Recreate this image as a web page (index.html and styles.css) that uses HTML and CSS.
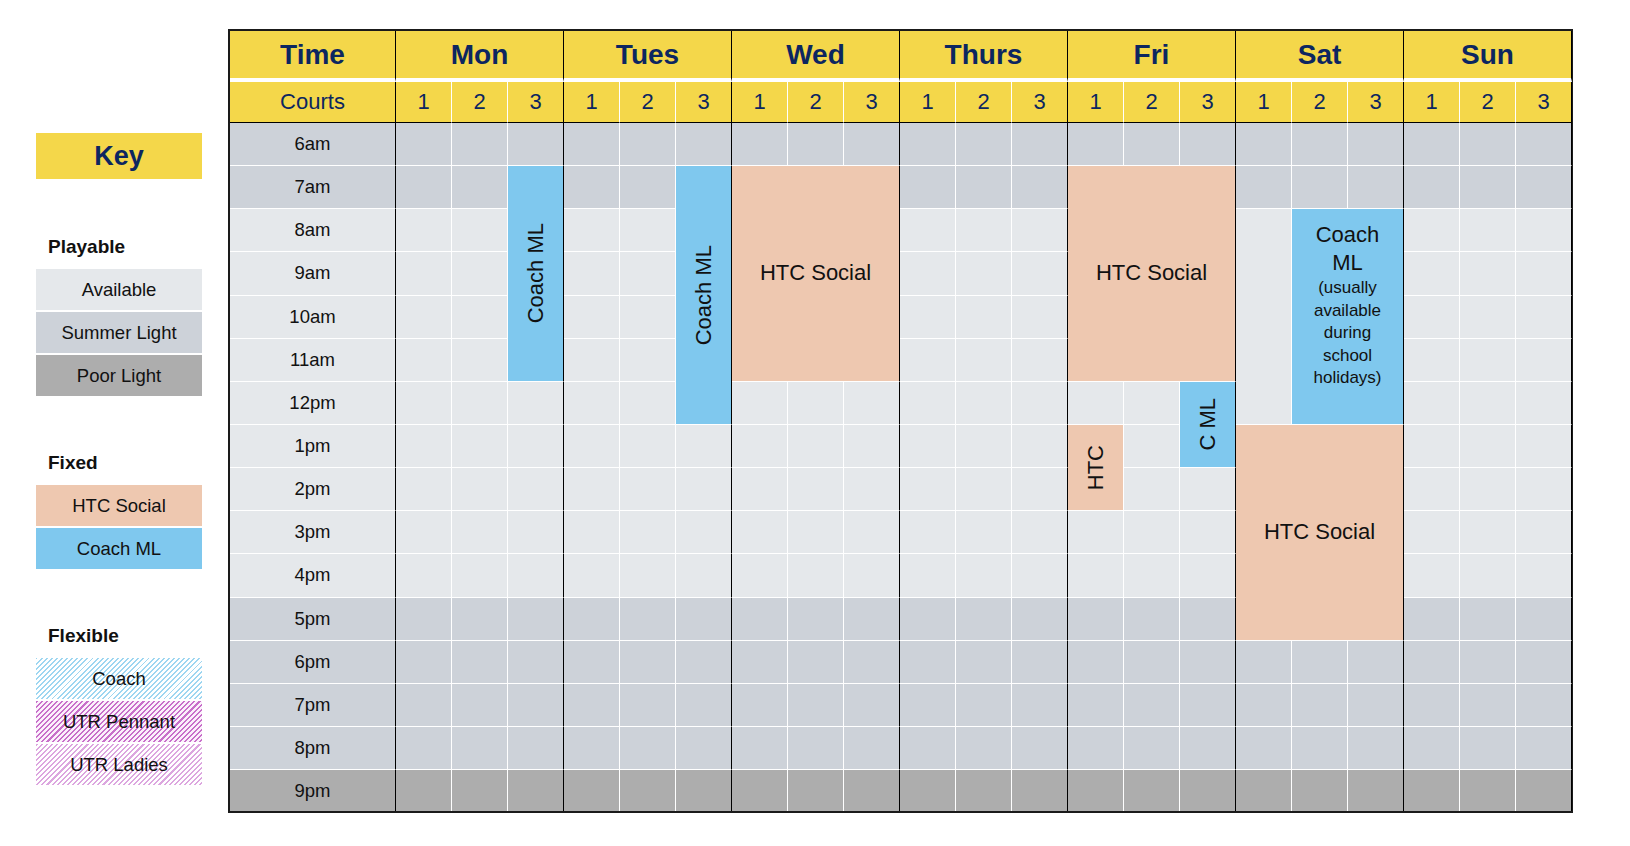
FILE: index.html
```html
<!DOCTYPE html>
<html lang="en">
<head>
<meta charset="utf-8">
<title>Court Schedule</title>
<link rel="stylesheet" href="styles.css">
</head>
<body>
<div class="page">
  <aside class="key">
    <div class="key-title">Key</div>
    <section class="group">
      <h3 class="group-label">Playable</h3>
      <div class="swatches">
        <div class="sw sw-av">Available</div>
        <div class="sw sw-sl">Summer Light</div>
        <div class="sw sw-pl">Poor Light</div>
      </div>
    </section>
    <section class="group">
      <h3 class="group-label">Fixed</h3>
      <div class="swatches">
        <div class="sw sw-htc">HTC Social</div>
        <div class="sw sw-cml">Coach ML</div>
      </div>
    </section>
    <section class="group">
      <h3 class="group-label">Flexible</h3>
      <div class="swatches">
        <div class="sw sw-coach">Coach</div>
        <div class="sw sw-pen">UTR Pennant</div>
        <div class="sw sw-lad">UTR Ladies</div>
      </div>
    </section>
  </aside>

  <div class="sched">
    <div class="hd hd-time">Time</div>
    <div class="hd">Mon</div>
    <div class="hd">Tues</div>
    <div class="hd">Wed</div>
    <div class="hd">Thurs</div>
    <div class="hd">Fri</div>
    <div class="hd">Sat</div>
    <div class="hd">Sun</div>

    <div class="courts">Courts</div>
    <div class="n">1</div><div class="n">2</div><div class="n e">3</div>
    <div class="n">1</div><div class="n">2</div><div class="n e">3</div>
    <div class="n">1</div><div class="n">2</div><div class="n e">3</div>
    <div class="n">1</div><div class="n">2</div><div class="n e">3</div>
    <div class="n">1</div><div class="n">2</div><div class="n e">3</div>
    <div class="n">1</div><div class="n">2</div><div class="n e">3</div>
    <div class="n">1</div><div class="n">2</div><div class="n e">3</div>

    <div class="r sl"><div class="t">6am</div>
      <div class="c"></div><div class="c"></div><div class="c e"></div>
      <div class="c"></div><div class="c"></div><div class="c e"></div>
      <div class="c"></div><div class="c"></div><div class="c e"></div>
      <div class="c"></div><div class="c"></div><div class="c e"></div>
      <div class="c"></div><div class="c"></div><div class="c e"></div>
      <div class="c"></div><div class="c"></div><div class="c e"></div>
      <div class="c"></div><div class="c"></div><div class="c e"></div>
    </div>
    <div class="r sl"><div class="t">7am</div>
      <div class="c"></div><div class="c"></div>
      <div class="c"></div><div class="c"></div>
      <div class="c"></div><div class="c"></div><div class="c e"></div>
      <div class="c"></div><div class="c"></div><div class="c e"></div>
      <div class="c"></div><div class="c"></div><div class="c e"></div>
    </div>
    <div class="r av"><div class="t">8am</div>
      <div class="c"></div><div class="c"></div>
      <div class="c"></div><div class="c"></div>
      <div class="c"></div><div class="c"></div><div class="c e"></div>
      <div class="c"></div><div class="c"></div><div class="c e"></div>
    </div>
    <div class="r av"><div class="t">9am</div>
      <div class="c"></div><div class="c"></div>
      <div class="c"></div><div class="c"></div>
      <div class="c"></div><div class="c"></div><div class="c e"></div>
      <div class="c"></div><div class="c"></div><div class="c e"></div>
    </div>
    <div class="r av"><div class="t">10am</div>
      <div class="c"></div><div class="c"></div>
      <div class="c"></div><div class="c"></div>
      <div class="c"></div><div class="c"></div><div class="c e"></div>
      <div class="c"></div><div class="c"></div><div class="c e"></div>
    </div>
    <div class="r av"><div class="t">11am</div>
      <div class="c"></div><div class="c"></div>
      <div class="c"></div><div class="c"></div>
      <div class="c"></div><div class="c"></div><div class="c e"></div>
      <div class="c"></div><div class="c"></div><div class="c e"></div>
    </div>
    <div class="r av"><div class="t">12pm</div>
      <div class="c"></div><div class="c"></div><div class="c e"></div>
      <div class="c"></div><div class="c"></div>
      <div class="c"></div><div class="c"></div><div class="c e"></div>
      <div class="c"></div><div class="c"></div><div class="c e"></div>
      <div class="c"></div><div class="c"></div>
      <div class="c"></div><div class="c"></div><div class="c e"></div>
    </div>
    <div class="r av"><div class="t">1pm</div>
      <div class="c"></div><div class="c"></div><div class="c e"></div>
      <div class="c"></div><div class="c"></div><div class="c e"></div>
      <div class="c"></div><div class="c"></div><div class="c e"></div>
      <div class="c"></div><div class="c"></div><div class="c e"></div>
      <div class="c"></div>
      <div class="c"></div><div class="c"></div><div class="c e"></div>
    </div>
    <div class="r av"><div class="t">2pm</div>
      <div class="c"></div><div class="c"></div><div class="c e"></div>
      <div class="c"></div><div class="c"></div><div class="c e"></div>
      <div class="c"></div><div class="c"></div><div class="c e"></div>
      <div class="c"></div><div class="c"></div><div class="c e"></div>
      <div class="c"></div><div class="c e"></div>
      <div class="c"></div><div class="c"></div><div class="c e"></div>
    </div>
    <div class="r av"><div class="t">3pm</div>
      <div class="c"></div><div class="c"></div><div class="c e"></div>
      <div class="c"></div><div class="c"></div><div class="c e"></div>
      <div class="c"></div><div class="c"></div><div class="c e"></div>
      <div class="c"></div><div class="c"></div><div class="c e"></div>
      <div class="c"></div><div class="c"></div><div class="c e"></div>
      <div class="c"></div><div class="c"></div><div class="c e"></div>
    </div>
    <div class="r av"><div class="t">4pm</div>
      <div class="c"></div><div class="c"></div><div class="c e"></div>
      <div class="c"></div><div class="c"></div><div class="c e"></div>
      <div class="c"></div><div class="c"></div><div class="c e"></div>
      <div class="c"></div><div class="c"></div><div class="c e"></div>
      <div class="c"></div><div class="c"></div><div class="c e"></div>
      <div class="c"></div><div class="c"></div><div class="c e"></div>
    </div>
    <div class="r sl"><div class="t">5pm</div>
      <div class="c"></div><div class="c"></div><div class="c e"></div>
      <div class="c"></div><div class="c"></div><div class="c e"></div>
      <div class="c"></div><div class="c"></div><div class="c e"></div>
      <div class="c"></div><div class="c"></div><div class="c e"></div>
      <div class="c"></div><div class="c"></div><div class="c e"></div>
      <div class="c"></div><div class="c"></div><div class="c e"></div>
    </div>
    <div class="r sl"><div class="t">6pm</div>
      <div class="c"></div><div class="c"></div><div class="c e"></div>
      <div class="c"></div><div class="c"></div><div class="c e"></div>
      <div class="c"></div><div class="c"></div><div class="c e"></div>
      <div class="c"></div><div class="c"></div><div class="c e"></div>
      <div class="c"></div><div class="c"></div><div class="c e"></div>
      <div class="c"></div><div class="c"></div><div class="c e"></div>
      <div class="c"></div><div class="c"></div><div class="c e"></div>
    </div>
    <div class="r sl"><div class="t">7pm</div>
      <div class="c"></div><div class="c"></div><div class="c e"></div>
      <div class="c"></div><div class="c"></div><div class="c e"></div>
      <div class="c"></div><div class="c"></div><div class="c e"></div>
      <div class="c"></div><div class="c"></div><div class="c e"></div>
      <div class="c"></div><div class="c"></div><div class="c e"></div>
      <div class="c"></div><div class="c"></div><div class="c e"></div>
      <div class="c"></div><div class="c"></div><div class="c e"></div>
    </div>
    <div class="r sl"><div class="t">8pm</div>
      <div class="c"></div><div class="c"></div><div class="c e"></div>
      <div class="c"></div><div class="c"></div><div class="c e"></div>
      <div class="c"></div><div class="c"></div><div class="c e"></div>
      <div class="c"></div><div class="c"></div><div class="c e"></div>
      <div class="c"></div><div class="c"></div><div class="c e"></div>
      <div class="c"></div><div class="c"></div><div class="c e"></div>
      <div class="c"></div><div class="c"></div><div class="c e"></div>
    </div>
    <div class="r pl"><div class="t">9pm</div>
      <div class="c"></div><div class="c"></div><div class="c e"></div>
      <div class="c"></div><div class="c"></div><div class="c e"></div>
      <div class="c"></div><div class="c"></div><div class="c e"></div>
      <div class="c"></div><div class="c"></div><div class="c e"></div>
      <div class="c"></div><div class="c"></div><div class="c e"></div>
      <div class="c"></div><div class="c"></div><div class="c e"></div>
      <div class="c"></div><div class="c"></div><div class="c e"></div>
    </div>

    <div class="blk cml e b-mon3"><span class="vt">Coach ML</span></div>
    <div class="blk cml e b-tue3"><span class="vt">Coach ML</span></div>
    <div class="blk htc e b-wed">HTC Social</div>
    <div class="blk htc e b-fri">HTC Social</div>
    <div class="blk cml e b-fri3"><span class="vt">C ML</span></div>
    <div class="blk htc b-fri1"><span class="vt">HTC</span></div>
    <div class="blk avail b-sat1"></div>
    <div class="blk cml e b-satc">
      <div class="sat-text">
        <span class="big">Coach<br>ML</span>
        <span class="small">(usually<br>available<br>during<br>school<br>holidays)</span>
      </div>
    </div>
    <div class="blk htc e b-sat">HTC Social</div>
  </div>
</div>
</body>
</html>
```

FILE: styles.css
```css
* {
  box-sizing: border-box;
  margin: 0;
  padding: 0;
}

body {
  background: #ffffff;
  font-family: "Liberation Sans", Arial, sans-serif;
  color: #111111;
}

.page {
  display: flex;
  align-items: flex-start;
  gap: 26px;
  padding: 29px 0 0 36px;
}

/* ---------- Key / legend ---------- */
.key {
  width: 166px;
  margin-top: 104px;
  display: flex;
  flex-direction: column;
  gap: 55px;
}

.key-title {
  height: 46px;
  margin-bottom: 1px;
  background: #f4d74a;
  color: #0c2660;
  font-weight: 700;
  font-size: 27px;
  display: flex;
  align-items: center;
  justify-content: center;
}

.group-label {
  height: 24px;
  line-height: 24px;
  margin-bottom: 10px;
  padding-left: 12px;
  font-size: 19px;
  font-weight: 700;
  color: #111111;
}

.swatches {
  display: flex;
  flex-direction: column;
  gap: 2px;
}

.sw {
  height: 41px;
  display: flex;
  align-items: center;
  justify-content: center;
  font-size: 18.5px;
  color: #111111;
}

.sw-av { background: #e5e8eb; }
.sw-sl { background: #cdd2d9; }
.sw-pl { background: #adadad; }
.sw-htc { background: #eec8b0; }
.sw-cml { background: #7fc8ee; }
.sw-coach {
  background: repeating-linear-gradient(135deg, #9dd6f1 0 1.4px, #ffffff 1.4px 3.6px);
}
.sw-pen {
  background: repeating-linear-gradient(135deg, #c86fca 0 1.5px, #fbf0fb 1.5px 3.6px);
}
.sw-lad {
  background: repeating-linear-gradient(135deg, #dca6df 0 1.5px, #ffffff 1.5px 3.6px);
}

/* ---------- Schedule grid ---------- */
.sched {
  display: grid;
  grid-template-columns: 166px repeat(21, 56px);
  grid-template-rows: 51px 41px repeat(15, 43.15px) 41px;
  border: 2px solid #1a1a1a;
  border-right-width: 1px;
}

.hd {
  grid-column: span 3;
  background: #f4d74a;
  color: #0c2660;
  font-weight: 700;
  font-size: 28px;
  display: flex;
  align-items: center;
  justify-content: center;
  border-right: 1px solid #000000;
  border-bottom: 4px solid #ffffff;
}

.hd-time {
  grid-column: span 1;
}

.courts,
.n {
  background: #f4d74a;
  color: #0c2660;
  font-size: 22px;
  display: flex;
  align-items: center;
  justify-content: center;
  border-bottom: 1px solid #000000;
  border-right: 1px solid #ffffff;
}

.courts {
  border-right-color: #000000;
}

.r {
  display: contents;
}

.t {
  font-size: 18.5px;
  display: flex;
  align-items: center;
  justify-content: center;
  border-right: 1px solid #000000;
  border-bottom: 1px solid #ffffff;
}

.c {
  border-right: 1px solid #ffffff;
  border-bottom: 1px solid #ffffff;
}

.e {
  border-right-color: #000000;
}

.sl > * { background: #cdd2d9; }
.av > * { background: #e5e8eb; }
.pl > * {
  background: #adadad;
  border-bottom: 0;
}

/* ---------- Booking blocks ---------- */
.blk {
  display: flex;
  align-items: center;
  justify-content: center;
  font-size: 22px;
  color: #111111;
  border-right: 1px solid #ffffff;
  border-bottom: 1px solid #ffffff;
}

.blk.e {
  border-right-color: #000000;
}

.cml { background: #7fc8ee; }
.htc { background: #eec8b0; }
.avail { background: #e5e8eb; }

.vt {
  writing-mode: vertical-rl;
  transform: rotate(180deg);
  white-space: nowrap;
}

.b-mon3 { grid-column: 4; grid-row: 4 / 9; }
.b-tue3 { grid-column: 7; grid-row: 4 / 10; }
.b-wed  { grid-column: 8 / 11; grid-row: 4 / 9; }
.b-fri  { grid-column: 14 / 17; grid-row: 4 / 9; }
.b-fri3 { grid-column: 16; grid-row: 9 / 11; }
.b-fri1 { grid-column: 14; grid-row: 10 / 12; }
.b-sat1 { grid-column: 17; grid-row: 5 / 10; }
.b-satc {
  grid-column: 18 / 20;
  grid-row: 5 / 10;
  align-items: flex-start;
  padding-top: 12px;
}
.b-sat  { grid-column: 17 / 20; grid-row: 10 / 15; }

.sat-text {
  display: flex;
  flex-direction: column;
  align-items: center;
  text-align: center;
}

.sat-text .big {
  font-size: 22px;
  line-height: 28px;
}

.sat-text .small {
  font-size: 17px;
  line-height: 22.5px;
}
```
